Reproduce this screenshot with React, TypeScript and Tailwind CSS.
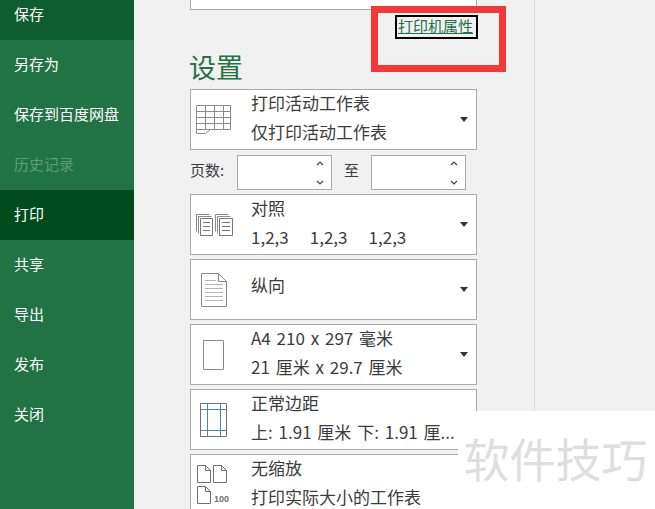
import React from "react";

const font = { fontFamily: '"Noto Sans CJK SC", "Noto Sans", sans-serif' };

const navItems = [
  { t: "保存", cls: "bg-[#0e5c2f] text-white" },
  { t: "另存为", cls: "text-white" },
  { t: "保存到百度网盘", cls: "text-white" },
  { t: "历史记录", cls: "text-[#5f9c7b]" },
  { t: "打印", cls: "bg-[#004b1c] text-white" },
  { t: "共享", cls: "text-white" },
  { t: "导出", cls: "text-white" },
  { t: "发布", cls: "text-white" },
  { t: "关闭", cls: "text-white" },
];

const S = "#8a8a8a";

function SheetIcon() {
  return (
    <svg width="36" height="30" viewBox="0 0 36 30" fill="none" stroke={S} strokeWidth="1">
      <path d="M.5.500h34v24H.5zM.5 6.500h34M.5 12.500h34M.5 18.500h34M9.500.500v24M18.500.500v24M27.500.500v24" />
      <path d="M.5 24.500v4h9l5-4" />
    </svg>
  );
}

function CollateIcon() {
  return (
    <svg width="37" height="22" viewBox="0 0 37 22" fill="none" stroke={S} strokeWidth="1">
      <path d="M.5.500h13M.5.500v17M2.500 2.500h13M2.500 2.500v17" />
      <path d="M4.500 4.500h12v17h-12zM7 8.500h7M7 12.500h7M7 16.500h7" stroke="#777" />
      <path d="M19.500.500h13M19.500.500v17M21.500 2.500h13M21.500 2.500v17" />
      <path d="M23.500 4.500h13v17h-13zM26 8.500h8M26 12.500h8M26 16.500h8" stroke="#777" />
    </svg>
  );
}

function PageIcon() {
  return (
    <svg width="26" height="34" viewBox="0 0 26 34" fill="none" stroke={S} strokeWidth="1">
      <path d="M.5.500h17l8 8v25H.5zM17.500.500v8h8" />
      <path d="M4 7.500h11M4 11.500h18M4 15.500h18M4 19.500h18M4 23.500h18M4 27.500h18" stroke="#b5b5b5" />
    </svg>
  );
}

function PaperIcon() {
  return (
    <svg width="21" height="30" viewBox="0 0 21 30" fill="none" stroke={S} strokeWidth="1">
      <path d="M.5.500h20v29H.5z" />
    </svg>
  );
}

function MarginIcon() {
  return (
    <svg width="27" height="34" viewBox="0 0 27 34" fill="none" strokeWidth="1">
      <path d="M.5.500h26v33H.5z" stroke="#707070" />
      <path d="M7.500.500v33M20.500.500v33M.5 6.500h26M.5 27.500h26" stroke="#4f86ad" />
    </svg>
  );
}

function ScaleIcon() {
  return (
    <svg width="36" height="39" viewBox="0 0 36 39" fill="none" stroke="#707070" strokeWidth="1">
      <path d="M.5.500h8l5 5v12H.5zM8.500.500v5h5" />
      <path d="M16.500.500h8l5 5v12h-13zM24.500.500v5h5" />
      <path d="M.5 21.500h8l5 5v12H.5zM8.500 21.500v5h5" />
      <text x="17" y="37" fontSize="9" fontWeight="700" fill="#707070" stroke="none" style={{ fontFamily: '"Liberation Sans", sans-serif' }}>100</text>
    </svg>
  );
}

function Select({ icon, a, b, arrow = true, iconPad = "pl-[8px]" }: { icon?: React.ReactNode; a: React.ReactNode; b?: React.ReactNode; arrow?: boolean; iconPad?: string }) {
  return (
    <div className="h-[61px] w-[287px] shrink-0 border border-[#ababab] bg-white flex items-center relative text-[17px] text-[#3c3c3c] [word-spacing:2px]">
      <div className={`w-[60px] shrink-0 ${iconPad}`}>{icon}</div>
      <div className={`flex flex-col gap-[7px] leading-[22px] whitespace-nowrap ${b ? "-mt-[4px]" : "-mt-[10px]"}`}>
        <div>{a}</div>
        {b ? <div>{b}</div> : null}
      </div>
      {arrow ? (
        <div className="ml-auto mr-[8px] w-0 h-0 border-x-[4px] border-x-transparent border-t-[5px] border-t-[#333]" />
      ) : null}
    </div>
  );
}

function Chevrons() {
  return (
    <div className="ml-auto mr-[7px] flex flex-col justify-between h-[24px] items-center">
      <svg width="8" height="5" viewBox="0 0 8 5" fill="none" stroke="#444" strokeWidth="1.200"><path d="M1 4l3-3 3 3" /></svg>
      <svg width="8" height="5" viewBox="0 0 8 5" fill="none" stroke="#444" strokeWidth="1.200"><path d="M1 1l3 3 3-3" /></svg>
    </div>
  );
}

function Spinner({ w }: { w: string }) {
  return (
    <div className={`${w} h-[35px] border border-[#ababab] bg-white flex items-center`}>
      <Chevrons />
    </div>
  );
}

export default function App() {
  return (
    <div className="w-[655px] h-[509px] overflow-hidden flex bg-[#f1f1f1] relative" style={font}>
      <nav className="w-[134px] shrink-0 bg-[#217346] flex flex-col -mt-[10px]">
        {navItems.map((n) => (
          <div key={n.t} className={`h-[50px] shrink-0 flex items-center pl-[14px] pb-[2px] text-[15px] ${n.cls}`}>
            {n.t}
          </div>
        ))}
      </nav>

      <main className="w-[401px] shrink-0 border-r border-[#dcdcdc] pl-[56px] flex flex-col gap-[4px] -mt-[51px]">
        <Select a={<span className="relative top-[16px]">就绪</span>} arrow={false} />
        <div className="h-[26px] flex justify-end w-[287px] shrink-0">
          <div className="h-[24px] w-[83px] mt-[1px] -mr-[1px] border-2 border-black flex items-center justify-center text-[15px] text-[#217346] underline leading-none pb-[4px] pr-[2px]">
            打印机属性
          </div>
        </div>
        <h2 className="text-[27px] leading-[30px] text-[#217346] h-[30px] mt-[8px] mb-[3px] -ml-[1px] shrink-0">设置</h2>
        <Select icon={<SheetIcon />} iconPad="pl-[5px]" a="打印活动工作表" b="仅打印活动工作表" />
        <div className="flex items-center h-[35px] mt-[1px] shrink-0 text-[15px] text-[#3c3c3c]">
          <span className="w-[47px] -mt-[5px]">页数:</span>
          <Spinner w="w-[95px]" />
          <span className="w-[39px] text-center -mt-[5px]">至</span>
          <Spinner w="w-[95px]" />
        </div>
        <Select icon={<CollateIcon />} iconPad="pl-[5px]" a="对照" b={<span className="flex gap-[21px]"><span>1,2,3</span><span>1,2,3</span><span>1,2,3</span></span>} />
        <Select icon={<PageIcon />} iconPad="pl-[10px]" a="纵向" />
        <Select icon={<PaperIcon />} iconPad="pl-[12px]" a="A4 210 x 297 毫米" b="21 厘米 x 29.7 厘米" />
        <Select icon={<MarginIcon />} iconPad="pl-[9px]" a="正常边距" b="上: 1.91 厘米 下: 1.91 厘..." arrow={false} />
        <Select icon={<ScaleIcon />} iconPad="pl-[6px]" a="无缩放" b="打印实际大小的工作表" arrow={false} />
      </main>

      <div className="absolute left-[371px] top-[6px] w-[135px] h-[66px] border-[7px] border-[#f33838]" />
      <div className="absolute left-[458px] top-[411px] right-0 bottom-0 bg-white flex items-center justify-center pr-[2px]">
        <span className="text-[46px] leading-none text-[#dedede] whitespace-nowrap -mt-[6px]">软件技巧</span>
      </div>
    </div>
  );
}
